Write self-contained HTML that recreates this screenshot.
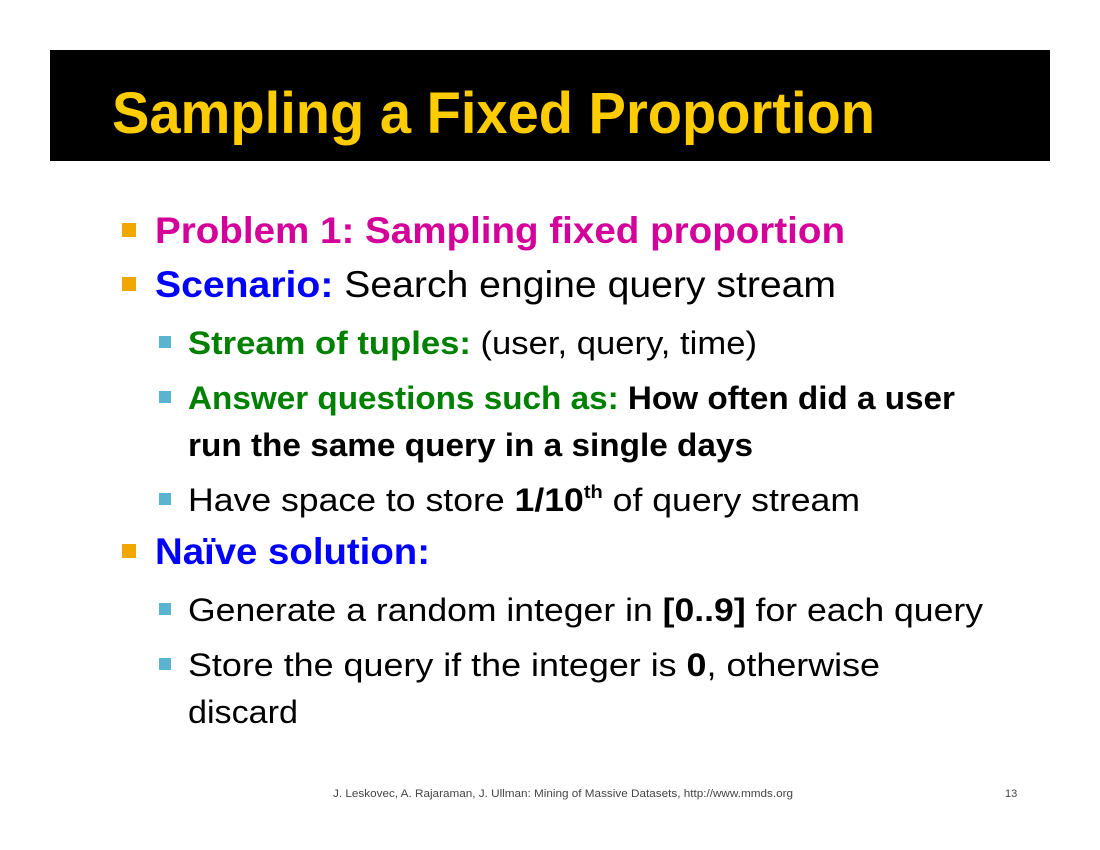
<!DOCTYPE html>
<html><head><meta charset="utf-8"><style>
html,body{margin:0;padding:0;background:#fff;width:1100px;height:850px;overflow:hidden}
svg{display:block}
text{font-family:"Liberation Sans",Arial,sans-serif}
</style></head><body>
<svg width="1100" height="850" viewBox="0 0 1100 850" xmlns="http://www.w3.org/2000/svg">
<rect x="50" y="50" width="1000" height="111" fill="#000"/>
<text x="112" y="133" font-size="58" font-weight="bold" fill="#FFCC00" textLength="763" lengthAdjust="spacingAndGlyphs">Sampling a Fixed Proportion</text>

<rect x="122" y="223" width="14" height="14" fill="#F0A800"/>
<text x="155" y="243" font-size="37" font-weight="bold" fill="#D4009A" textLength="690" lengthAdjust="spacingAndGlyphs">Problem 1: Sampling fixed proportion</text>

<rect x="122" y="277" width="14" height="14" fill="#F0A800"/>
<text x="155" y="297" font-size="37" textLength="681" lengthAdjust="spacingAndGlyphs"><tspan font-weight="bold" fill="#0000FF">Scenario:</tspan><tspan fill="#000"> Search engine query stream</tspan></text>

<rect x="159" y="336" width="12" height="12" fill="#5BB4CF"/>
<text x="188" y="354" font-size="32" textLength="569" lengthAdjust="spacingAndGlyphs"><tspan font-weight="bold" fill="#008000">Stream of tuples:</tspan><tspan fill="#000"> (user, query, time)</tspan></text>

<rect x="159" y="391" width="12" height="12" fill="#5BB4CF"/>
<text x="188" y="409" font-size="32" font-weight="bold" textLength="767" lengthAdjust="spacingAndGlyphs"><tspan fill="#008000">Answer questions such as:</tspan><tspan fill="#000"> How often did a user</tspan></text>
<text x="188" y="456" font-size="32" font-weight="bold" fill="#000" textLength="565" lengthAdjust="spacingAndGlyphs">run the same query in a single days</text>

<rect x="159" y="493" width="12" height="12" fill="#5BB4CF"/>
<text x="188" y="511" font-size="32" fill="#000" textLength="672" lengthAdjust="spacingAndGlyphs">Have space to store <tspan font-weight="bold">1/10</tspan><tspan font-weight="bold" font-size="18" dy="-13">th</tspan><tspan dy="13"> of query stream</tspan></text>

<rect x="122" y="544" width="14" height="14" fill="#F0A800"/>
<text x="155" y="564" font-size="37" font-weight="bold" fill="#0000FF" textLength="275" lengthAdjust="spacingAndGlyphs">Naïve solution:</text>

<rect x="159" y="603" width="12" height="12" fill="#5BB4CF"/>
<text x="188" y="621" font-size="32" fill="#000" textLength="795" lengthAdjust="spacingAndGlyphs">Generate a random integer in <tspan font-weight="bold">[0..9]</tspan> for each query</text>

<rect x="159" y="658" width="12" height="12" fill="#5BB4CF"/>
<text x="188" y="676" font-size="32" fill="#000" textLength="692" lengthAdjust="spacingAndGlyphs">Store the query if the integer is <tspan font-weight="bold">0</tspan>, otherwise</text>
<text x="188" y="723" font-size="32" fill="#000" textLength="110" lengthAdjust="spacingAndGlyphs">discard</text>

<text x="333" y="797" font-size="11" fill="#444" textLength="460" lengthAdjust="spacingAndGlyphs">J. Leskovec, A. Rajaraman, J. Ullman: Mining of Massive Datasets, http://www.mmds.org</text>
<text x="1005" y="797" font-size="11" fill="#444">13</text>
</svg>
</body></html>
